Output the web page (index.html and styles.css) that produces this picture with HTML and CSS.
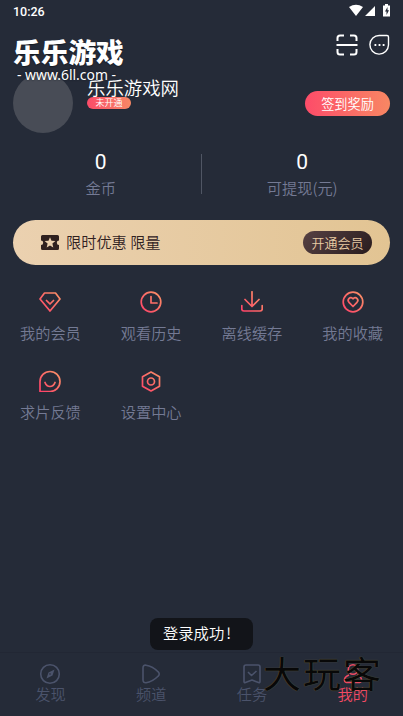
FILE: index.html
```html
<!DOCTYPE html>
<html lang="zh-CN">
<head>
<meta charset="utf-8">
<title>我的</title>
<link rel="stylesheet" href="styles.css">
</head>
<body>
<svg class="defs" width="0" height="0" aria-hidden="true"><defs>
<linearGradient id="warm" gradientUnits="userSpaceOnUse" x1="2" y1="20" x2="20" y2="2"><stop offset="0" stop-color="#ff4468"/><stop offset="1" stop-color="#fa9167"/></linearGradient>
</defs></svg>
<div class="app">
  <header class="status">
    <span>10:26</span>
    <svg width="42" height="14" viewBox="0 0 42 14" fill="#fff"><path d="M0 3Q7-1.500 14 3L7 12zM26 2v10H16zM34 1.500h2V0h3v1.500h2v11h-7z"/><path d="M38.500 3l-2.500 4.500h1.500V11L40 6.300h-1.500z" fill="#252b38"/></svg>
  </header>
  <div class="tools">
    <svg width="22" height="22" viewBox="0 0 22 22" fill="none" stroke="#fff" stroke-width="2"><path d="M1.500 7V4q0-2.500 2.500-2.500h4M14 1.500h4q2.500 0 2.500 2.500v3M20.500 15v3q0 2.500-2.500 2.500h-4M8 20.500H4Q1.500 20.500 1.500 18v-3M.5 11h21"/></svg>
    <svg width="22" height="22" viewBox="0 0 22 22" fill="none" stroke="#fff" stroke-width="1.400"><path d="M11.500 1.500h7.500q1.500 0 1.500 1.500v8a9.300 9.300 0 1 1-9-9.500z"/><path d="M6.500 11h1.800M10.600 11h1.800M14.700 11h1.800" stroke-width="1.800"/></svg>
  </div>
  <section class="profile">
    <div class="avatar"></div>
    <div class="identity"><div class="name">乐乐游戏网</div><div class="badge">未开通</div></div>
    <button class="reward">签到奖励</button>
  </section>
  <section class="stats">
    <div class="stat"><b>0</b><span>金币</span></div>
    <div class="stat"><b>0</b><span>可提现(元)</span></div>
  </section>
  <section class="vip">
    <svg width="18" height="16" viewBox="0 0 18 16"><path d="M1.500 0h15Q18 0 18 1.500V5.500a2.200 2.200 0 0 0 0 4.400v3.600q0 1.500-1.500 1.500h-15Q0 15 0 13.500V9.900a2.200 2.200 0 0 0 0-4.400V1.500Q0 0 1.500 0z" fill="#30211f"/><path d="M9 2.300l1.500 3.500 3.900.3-3 2.500.9 3.800L9 10.400l-3.300 2 .9-3.800-3-2.500 3.900-.3z" fill="#ecd1ae"/></svg>
    <span>限时优惠 限量</span>
    <button class="open">开通会员</button>
  </section>
  <section class="menu">
    <div class="item"><svg viewBox="0 0 22 22"><path d="M5.500 2h11L21 8 11 20 1 8zM7.500 9.500L11 13l3.500-3.500"/></svg><span>我的会员</span></div>
    <div class="item"><svg viewBox="0 0 22 22"><circle cx="11" cy="11" r="9.800"/><path d="M11 5.500V12h6"/></svg><span>观看历史</span></div>
    <div class="item"><svg viewBox="0 0 22 22"><path d="M11 .8V15M4 8.500l7 7 7-7M.8 14.500V18q0 2 2 2h16.400q2 0 2-2v-3.500"/></svg><span>离线缓存</span></div>
    <div class="item"><svg viewBox="0 0 22 22"><circle cx="11" cy="11" r="9.800"/><path d="M11 15.500L7 11.300C4.500 8.300 8.500 4.700 11 7.800c2.500-3.100 6.500.5 4 3.500z"/></svg><span>我的收藏</span></div>
    <div class="item"><svg viewBox="0 0 22 22"><path d="M1 21.500V11.500A10 10 0 1 1 11 21.500zM6 12.500q1.500 4 5 4t5-4"/></svg><span>求片反馈</span></div>
    <div class="item"><svg viewBox="0 0 22 22"><path d="M11 2l8.500 4.800v9.400L11 21l-8.500-4.800V6.800z"/><circle cx="11" cy="11.500" r="3.500"/></svg><span>设置中心</span></div>
  </section>
  <nav class="tabs">
    <div class="tab"><svg viewBox="0 0 22 22"><circle cx="11" cy="11" r="9.300"/><path d="M15.500 6.500l-2 6-6 3 2-6z" fill="currentColor" stroke="none"/><circle cx="11" cy="11" r=".8" fill="#252b38" stroke="none"/></svg><span>发现</span></div>
    <div class="tab"><svg viewBox="0 0 22 22"><path d="M3 5Q3 1.800 6 2.200c4 .5 8.500 3 12 6.500q2.500 2.300 0 4.600c-3.500 3.500-8 6-12 6.500q-3 .2-3-2.800z"/></svg><span>频道</span></div>
    <div class="tab"><svg viewBox="0 0 22 22"><path d="M3 4q0-2 2-2h12q2 0 2 2v14.500q0 1.500-1.500 1L11 17l-6.500 2.500Q3 20 3 18.500zM7 9l3.500 3.500L15.500 8"/></svg><span>任务</span></div>
    <div class="tab active"><svg viewBox="0 0 22 22"><circle cx="11" cy="6.500" r="4.700"/><path d="M7 12q-5 2-4.500 5.500Q3 19.500 6 19.500h10q3 0 3.500-2Q20 14 15 12"/></svg><span>我的</span></div>
  </nav>
  <div class="logo"><strong>乐乐游戏</strong><span>- www.6ll.com -</span></div>
  <div class="toast">登录成功<i>!</i></div>
  <div class="stamp"><span>大</span><span>玩</span><span>客</span></div>
</div>
</body>
</html>
```
FILE: styles.css
```css
* { box-sizing: border-box; }
body { margin: 0; background: #252b38; }
.defs { position: absolute; }
.app { position: relative; width: 403px; height: 716px; overflow: hidden; display: flex; flex-direction: column; background: #252b38; color: #fff; font-family: "Noto Sans CJK SC", sans-serif; font-weight: 350; white-space: nowrap; }
button { border: 0; padding: 0; font: inherit; color: inherit; }
.status { height: 33px; padding: 4px 12px 0 13px; display: flex; justify-content: space-between; font: 500 12.500px/15px Roboto, sans-serif; }
.tools { height: 40px; padding-right: 13px; display: flex; justify-content: flex-end; gap: 10px; }
.tools svg { margin-top: 1px; }
.profile { height: 60px; margin: 0 13px; display: flex; align-items: flex-start; }
.avatar { width: 60px; height: 60px; border-radius: 50%; background: #484c56; }
.identity { margin-left: 14px; }
.name { margin-top: 3px; height: 21px; font-size: 18.400px; line-height: 23px; }
.badge { width: 44px; height: 12px; border-radius: 6px; background: linear-gradient(90deg, #fb4b69, #f88865); text-align: center; font-size: 9px; line-height: 12px; }
.reward { margin: 18px 0 0 auto; width: 85px; height: 25px; border-radius: 13px; background: linear-gradient(90deg, #fd4c69, #f88763); font-size: 13.200px; line-height: 23px; }
.stats { height: 87px; display: flex; background: linear-gradient(#505664, #505664) 201px 21px / 1px 40px no-repeat; }
.stat { flex: 1; padding-top: 16px; display: flex; flex-direction: column; align-items: center; }
.stat b { font: 400 21px/27px Roboto, sans-serif; }
.stat span { margin-top: -2px; font-size: 15.200px; line-height: 26px; color: #747a94; }
.vip { height: 45px; flex: none; margin: 0 13px; padding: 0 18px 0 28px; border-radius: 23px; display: flex; align-items: center; background: linear-gradient(90deg, #ebd1b0, #e2c493); color: #30211f; font-size: 15.200px; }
.vip span { margin: -4px 0 0 7px; }
.open { margin-left: auto; width: 69px; height: 23px; border-radius: 12px; background: linear-gradient(135deg, #574143, #291c1e); color: #e9cca4; font-size: 13px; line-height: 21px; }
.menu { display: grid; grid-template-columns: repeat(4, 1fr); grid-auto-rows: 79px; padding-top: 26px; }
.item, .tab { display: flex; flex-direction: column; align-items: center; font-size: 15.200px; color: #747a94; }
.item svg { width: 22px; height: 22px; fill: none; stroke: url(#warm); stroke-width: 1.700; stroke-linejoin: round; stroke-linecap: round; }
.item span { margin-top: 7px; line-height: 24px; }
.tabs { margin-top: auto; height: 64px; display: grid; grid-template-columns: repeat(4, 1fr); padding-top: 10px; border-top: 1px solid #222734; }
.tab { color: #4b536b; }
.tab svg { width: 22px; height: 22px; fill: none; stroke: currentColor; stroke-width: 1.600; stroke-linejoin: round; }
.tab span { margin-top: -1px; line-height: 19px; }
.active { color: #f34a64; }
.logo { position: absolute; left: 13px; top: 36px; width: 112px; }
.logo strong { display: block; font-size: 27.700px; line-height: 31px; font-weight: 900; text-shadow: 0 1px 1px #151921; }
.logo span { display: block; margin-left: 4px; font: 13.900px/15px "Noto Sans", sans-serif; text-shadow: 0 0 2px #151921; }
.toast { position: absolute; left: 150px; top: 618px; width: 103px; height: 32px; border-radius: 8px; padding-left: 13px; background: #121419; font-size: 15.300px; line-height: 29px; }
.toast i { margin-left: 2px; font-style: normal; }
.stamp { position: absolute; left: 263px; top: 651px; display: flex; color: #080808; font-size: 38px; line-height: 44px; font-weight: 400; text-shadow: 0 0 1px #777044; }
.stamp span { width: 40px; transform: scaleY(.95); }
```
